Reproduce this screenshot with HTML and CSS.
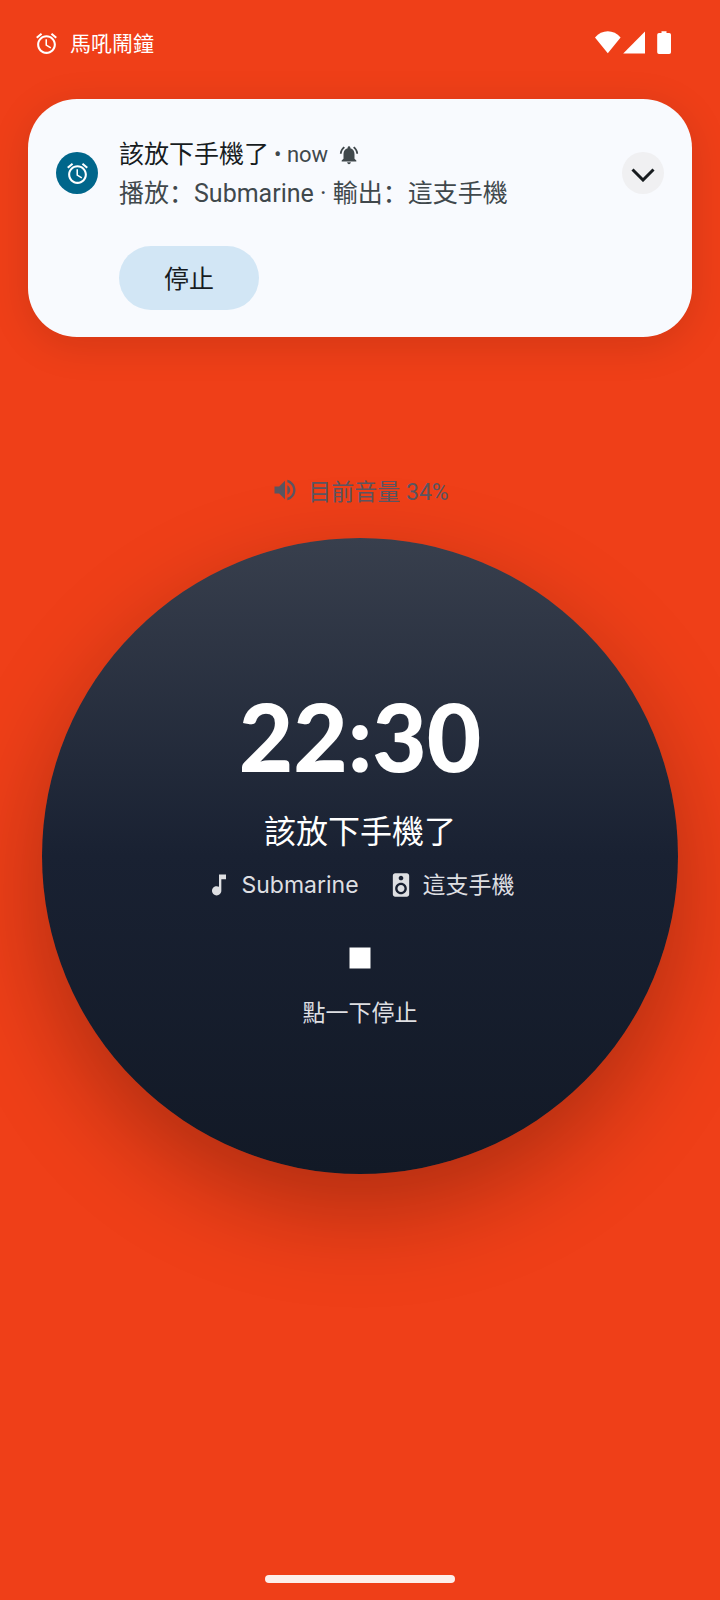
FILE: index.html
```html
<!DOCTYPE html>
<html lang="en">
  <head>
    <meta charset="UTF-8" />
    <meta name="viewport" content="width=device-width, initial-scale=1.0" />
    <title>馬吼鬧鐘</title>
    <link rel="stylesheet" href="styles.css">
  </head>
  <body>
    <header class="status-bar">
      <svg class="icon-alarm" viewBox="0 0 24 24"><path d="M22 5.72l-4.6-3.86-1.29 1.53 4.6 3.86L22 5.72zM7.88 3.39L6.6 1.86 2 5.71l1.29 1.53 4.59-3.85zM12.5 8H11v6l4.75 2.85.75-1.23-4-2.37V8zM12 4c-4.97 0-9 4.03-9 9s4.02 9 9 9c4.97 0 9-4.03 9-9s-4.03-9-9-9zm0 16c-3.87 0-7-3.13-7-7s3.13-7 7-7 7 3.13 7 7-3.13 7-7 7z"/></svg>
      <span class="app-name">馬吼鬧鐘</span>
      <svg class="icon-system" viewBox="0 0 76 24">
        <path d="M0 6.500C3.500 2.500 8 .3 12.800.3s9.300 2.200 12.800 6.200L12.800 22.300z"/>
        <path d="M50 .6V22.400H28.200z"/>
        <path d="M66.500.3h5v1.600h2.700q1.800 0 1.800 1.800V21.200q0 1.800-1.800 1.800H64q-1.800 0-1.800-1.800V3.700q0-1.800 1.800-1.800h2.500z"/>
      </svg>
    </header>

    <!-- 通知 -->
    <section class="notification">
      <div class="app-icon">
        <svg class="icon-alarm" viewBox="0 0 24 24"><path d="M22 5.72l-4.6-3.86-1.29 1.53 4.6 3.86L22 5.72zM7.88 3.39L6.6 1.86 2 5.71l1.29 1.53 4.59-3.85zM12.5 8H11v6l4.75 2.85.75-1.23-4-2.37V8zM12 4c-4.97 0-9 4.03-9 9s4.02 9 9 9c4.97 0 9-4.03 9-9s-4.03-9-9-9zm0 16c-3.87 0-7-3.13-7-7s3.13-7 7-7 7 3.13 7 7-3.13 7-7 7z"/></svg>
      </div>
      <div class="notification-body">
        <div class="notification-title">
          <h2>該放下手機了</h2>
          <span class="time-ago">• now</span>
          <svg class="icon-bell" viewBox="0 0 24 24"><path d="M7.58 4.08L6.15 2.65C3.75 4.48 2.17 7.3 2.03 10.5h2c.15-2.65 1.51-4.97 3.55-6.42zm12.39 6.42h2c-.15-3.2-1.73-6.02-4.12-7.85l-1.42 1.43c2.02 1.45 3.39 3.77 3.54 6.42zM18 11c0-3.07-1.64-5.64-4.5-6.32V4c0-.83-.67-1.5-1.5-1.5s-1.5.67-1.5 1.5v.68C7.63 5.36 6 7.92 6 11v5l-2 2v1h16v-1l-2-2v-5zm-6 11c1.100 0 2-.9 2-2h-4c0 1.100.9 2 2 2z"/></svg>
        </div>
        <p>播放：Submarine · 輸出：這支手機</p>
        <button class="stop-action">停止</button>
      </div>
      <button class="expand" aria-label="展開">
        <svg viewBox="0 0 24 14"><path d="M1.500 1.500L12 12L22.500 1.500"/></svg>
      </button>
    </section>

    <main>
      <div class="volume">
        <svg class="icon" viewBox="0 0 24 24"><path d="M3 9v6h4l5 5V4L7 9H3zm13.500 3c0-1.770-1.020-3.290-2.500-4.030v8.050c1.480-.73 2.500-2.250 2.500-4.020zM14 3.230v2.060c2.890.86 5 3.540 5 6.710s-2.110 5.850-5 6.710v2.060c4.010-.91 7-4.490 7-8.770s-2.990-7.860-7-8.770z"/></svg>
        <span>目前音量 34%</span>
      </div>

      <!-- 點一下停止鬧鐘 -->
      <button class="dial">
        <span class="clock">22:30</span>
        <span class="label">該放下手機了</span>
        <span class="meta">
          <span class="meta-item">
            <svg class="icon" viewBox="0 0 24 24"><path d="M12 3v10.550c-.59-.34-1.270-.55-2-.55-2.210 0-4 1.790-4 4s1.790 4 4 4 4-1.790 4-4V7h4V3h-6z"/></svg>
            Submarine
          </span>
          <span class="meta-item">
            <svg class="icon" viewBox="0 0 24 24"><path d="M17 2H7c-1.100 0-2 .9-2 2v16c0 1.100.9 1.990 2 1.990L17 22c1.100 0 2-.9 2-2V4c0-1.100-.9-2-2-2zm-5 2c1.100 0 2 .9 2 2s-.9 2-2 2c-1.110 0-2-.9-2-2s.89-2 2-2zm0 16c-2.760 0-5-2.240-5-5s2.240-5 5-5 5 2.240 5 5-2.240 5-5 5zm0-8c-1.660 0-3 1.340-3 3s1.340 3 3 3 3-1.340 3-3-1.340-3-3-3z"/></svg>
            這支手機
          </span>
        </span>
        <svg class="icon-stop" viewBox="0 0 24 24"><path d="M6 6h12v12H6z"/></svg>
        <span class="hint">點一下停止</span>
      </button>
    </main>

    <div class="home-bar"></div>
  </body>
</html>
```

FILE: styles.css
```css
* {
  box-sizing: border-box;
}
body {
  display: flex;
  flex-direction: column;
  min-height: 100vh;
  margin: 0;
  background-color: #ef3f18;
  font-family: Roboto, "Noto Sans CJK SC", sans-serif;
  overflow-x: hidden;
}
svg {
  display: block;
  flex: none;
  fill: currentColor;
}
button {
  border: 0;
  padding: 0;
  font: inherit;
  cursor: pointer;
}
.status-bar {
  display: flex;
  align-items: center;
  gap: 11px;
  height: 86px;
  padding: 0 49px 0 34px;
  color: #fff;
}
.icon-alarm {
  width: 25px;
  height: 25px;
}
.app-name {
  padding-bottom: 2px;
  font-size: 21px;
}
.icon-system {
  width: 76px;
  height: 24px;
  margin-left: auto;
}

/* 通知卡片 */
.notification {
  display: flex;
  align-items: flex-start;
  margin: 13px 28px 0;
  padding: 36px 28px 27px;
  border-radius: 49px;
  background-color: #f8fafe;
  color: #40484c;
  box-shadow: 0 8px 40px rgba(0, 0, 0, 0.12);
}
.app-icon,
.expand {
  display: flex;
  align-items: center;
  justify-content: center;
  flex: none;
  width: 42px;
  height: 42px;
  margin-top: 17px;
  border-radius: 50%;
}
.app-icon {
  background-color: #00668b;
  color: #fff;
}
.notification-body {
  flex: 1;
  padding-left: 21px;
  font-size: 25px;
  line-height: 39px;
}
.notification-title {
  display: flex;
  align-items: center;
}
.notification-title h2 {
  margin: 0;
  color: #171c1f;
  font-size: 25px;
  font-weight: 400;
}
.time-ago {
  padding: 0 10px 0 5px;
  font-size: 22px;
}
.icon-bell {
  width: 22px;
  height: 22px;
}
.notification p {
  margin: 0;
}
.stop-action {
  display: block;
  width: 140px;
  height: 64px;
  margin-top: 33px;
  padding-top: 2px;
  border-radius: 32px;
  background-color: #d2e6f5;
  color: #171c1f;
}
.expand {
  background-color: #f0f0f2;
  color: #171c1f;
}
.expand svg {
  width: 24px;
  height: 14px;
  margin-top: 4px;
  fill: none;
  stroke: currentColor;
  stroke-width: 3;
}

/* 響鈴畫面 */
main {
  flex: 1;
  padding: 136px 42px 0;
  font-size: 23px;
}
.icon {
  width: 28px;
  height: 28px;
}
.volume {
  display: flex;
  align-items: center;
  justify-content: center;
  gap: 9px;
  height: 34px;
  margin-bottom: 31px;
  color: #5a5560;
}
.dial {
  display: flex;
  flex-direction: column;
  align-items: center;
  justify-content: center;
  width: 100%;
  aspect-ratio: 1;
  padding-bottom: 3px;
  border-radius: 50%;
  background: linear-gradient(#383f4d, #192132 50%, #121926);
  box-shadow: 0 36px 96px rgba(0, 0, 0, 0.27);
  color: #dedfe2;
  font-family: Inter, "Noto Sans CJK SC", sans-serif;
}
.clock {
  color: #fff;
  font-family: Lato, sans-serif;
  font-size: 94px;
  font-weight: 900;
  line-height: 112px;
}
.label {
  margin-top: 18px;
  color: #fff;
  font-size: 32px;
  line-height: 44px;
}
.meta {
  display: flex;
  gap: 28px;
  margin-top: 14px;
}
.meta-item {
  display: flex;
  align-items: center;
  gap: 8px;
  line-height: 34px;
}
.icon-stop {
  width: 42px;
  height: 42px;
  margin-top: 35px;
  color: #fff;
}
.hint {
  margin-top: 17px;
  line-height: 34px;
}
.home-bar {
  width: 190px;
  height: 8px;
  margin: 0 auto 17px;
  border-radius: 4px;
  background-color: #fdefeb;
}
```
